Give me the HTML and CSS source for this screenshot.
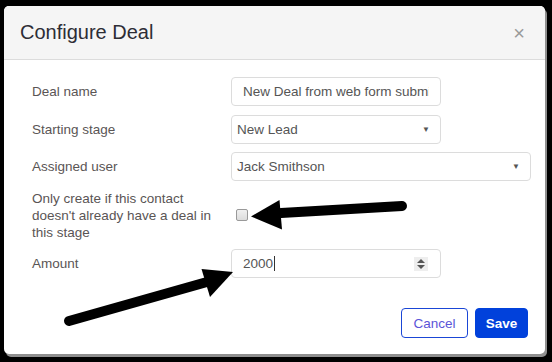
FILE: index.html
```html
<!DOCTYPE html>
<html>
<head>
<meta charset="utf-8">
<link rel="stylesheet" href="styles.css">
</head>
<body>
<div class="modal">
  <div class="modal-header">
    <h1 class="title">Configure Deal</h1>
    <span class="close">&times;</span>
  </div>
  <div class="modal-body">
    <div class="row">
      <label class="label">Deal name</label>
      <div class="field"><div class="input short"><span class="clip">New Deal from web form submission</span></div></div>
    </div>
    <div class="row">
      <label class="label">Starting stage</label>
      <div class="field"><div class="select short"><span>New Lead</span><span class="caret">&#9660;</span></div></div>
    </div>
    <div class="row">
      <label class="label">Assigned user</label>
      <div class="field"><div class="select wide"><span>Jack Smithson</span><span class="caret">&#9660;</span></div></div>
    </div>
    <div class="row multi">
      <label class="label">Only create if this contact doesn't already have a deal in this stage</label>
      <div class="field"><span class="checkbox"></span></div>
    </div>
    <div class="row">
      <label class="label">Amount</label>
      <div class="field"><div class="input short"><span class="val">2000</span><span class="cursor"></span><span class="spin"><span class="up"></span><span class="down"></span></span></div></div>
    </div>
  </div>
  <div class="modal-footer">
    <button class="btn cancel">Cancel</button>
    <button class="btn save">Save</button>
  </div>
</div>
<svg class="arrows" viewBox="0 0 552 362" width="552" height="362">
  <line x1="281" y1="213" x2="402" y2="206" stroke="#000" stroke-width="10" stroke-linecap="round"/>
  <polygon points="251,216.5 279.5,200 282,229.5" fill="#000"/>
  <line x1="69" y1="321" x2="214" y2="280" stroke="#000" stroke-width="10" stroke-linecap="round"/>
  <polygon points="201.5,269 233,272 210,297" fill="#000"/>
</svg>
</body>
</html>
```
FILE: styles.css
```css
* { box-sizing: border-box; }
html, body { margin: 0; padding: 0; }
body {
  width: 552px;
  height: 362px;
  background: #000;
  font-family: "Liberation Sans", Arial, sans-serif;
  position: relative;
  overflow: hidden;
  padding: 6px 0 0 4px;
}
.modal {
  width: 541px;
  height: 348px;
  background: #fff;
  border-radius: 5px;
  box-shadow: 2px 3px 0 #8f8f8f;
  display: flex;
  flex-direction: column;
  overflow: hidden;
}
.modal-header {
  height: 54px;
  background: #f5f5f5;
  border-bottom: 1px solid #dcdcdc;
  display: flex;
  align-items: center;
  justify-content: space-between;
  padding: 0 20px 0 16px;
}
.title {
  margin: 0;
  font-weight: normal;
  font-size: 20px;
  color: #2d2d35;
}
.close {
  font-size: 20px;
  color: #9a9a9a;
  line-height: 1;
}
.modal-body {
  padding: 17px 0 0 28px;
  display: flex;
  flex-direction: column;
  gap: 8.5px;
}
.row {
  display: flex;
  align-items: center;
  min-height: 29px;
}
.label {
  width: 199px;
  flex: none;
  font-size: 13.5px;
  line-height: 17px;
  color: #5a5555;
  padding-right: 20px;
}
.field { display: flex; align-items: center; }
.input, .select {
  height: 29px;
  border: 1px solid #dcdcdc;
  border-radius: 4px;
  display: flex;
  align-items: center;
  font-size: 13.5px;
  color: #555;
  position: relative;
  background: #fff;
}
.short { width: 210px; }
.wide { width: 300px; }
.input { padding: 0 0 0 11px; }
.clip { white-space: nowrap; overflow: hidden; width: 186px; display: block; }
.select { padding: 0 0 0 5px; justify-content: space-between; padding-right: 10px; }
.caret { font-size: 8px; color: #555; }
.cursor {
  width: 1px;
  height: 15px;
  background: #333;
  margin-left: 1px;
}
.spin {
  position: absolute;
  right: 12px;
  top: 7px;
  width: 14px;
  height: 14px;
  background: #eeeeee;
  display: flex;
  flex-direction: column;
  align-items: center;
  justify-content: center;
  gap: 2px;
}
.up, .down {
  width: 0; height: 0;
  border-left: 4px solid transparent;
  border-right: 4px solid transparent;
}
.up { border-bottom: 4px solid #555; }
.down { border-top: 4px solid #555; }
.checkbox {
  margin-left: 5px;
  width: 12px;
  height: 12px;
  border: 1px solid #999;
  border-radius: 2px;
  background: linear-gradient(#f0f0f0, #dcdcdc);
}
.modal-footer {
  margin-top: auto;
  display: flex;
  justify-content: flex-end;
  gap: 7px;
  padding: 0 17px 16px 0;
}
.btn {
  height: 30px;
  border-radius: 4px;
  font-family: "Liberation Sans", Arial, sans-serif;
  font-size: 13.5px;
  padding: 0;
}
.cancel {
  width: 67px;
  background: #fff;
  border: 1px solid #1a46d6;
  color: #5b55d8;
}
.save {
  width: 53px;
  background: #0141db;
  border: 1px solid #0141db;
  color: #fff;
  font-weight: bold;
}
.arrows {
  position: absolute;
  left: 0;
  top: 0;
  pointer-events: none;
}
```
